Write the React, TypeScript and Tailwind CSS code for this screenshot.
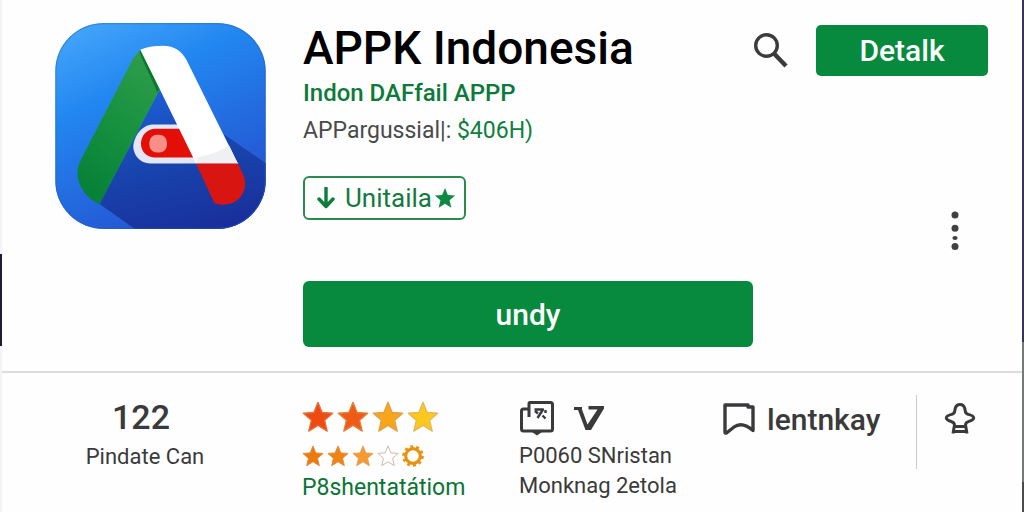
import React from "react";

const STAR = "M12 1 L15.1 8.6 L23 9.2 L17 14.5 L18.9 22.6 L12 18.3 L5.1 22.6 L7 14.5 L1 9.2 L8.9 8.6 Z";

function Star({ className, fill, stroke = "none" }: { className: string; fill: string; stroke?: string }) {
  return (
    <svg viewBox="0 0 24 24" className={className} aria-hidden="true">
      <path d={STAR} fill={fill} stroke={stroke} strokeWidth="1" strokeLinejoin="round" />
    </svg>
  );
}

function AppLogo() {
  return (
    <svg viewBox="45 38 631 617" className="h-[206px] w-full" role="img" aria-label="APPK Indonesia">
      <defs>
        <linearGradient id="sky" x1="0.1" y1="0" x2="0.6" y2="1">
          <stop offset="0" stopColor="#45a6fb" />
          <stop offset="0.35" stopColor="#2286f0" />
          <stop offset="1" stopColor="#2450cf" />
        </linearGradient>
        <linearGradient id="shade" x1="0.3" y1="0" x2="0.6" y2="1">
          <stop offset="0" stopColor="#1c5fd6" />
          <stop offset="0.5" stopColor="#1845ad" />
          <stop offset="1" stopColor="#19309c" />
        </linearGradient>
        <linearGradient id="leaf" x1="0.7" y1="0" x2="0.3" y2="1">
          <stop offset="0" stopColor="#2f9c4a" />
          <stop offset="0.5" stopColor="#16913e" />
          <stop offset="1" stopColor="#078038" />
        </linearGradient>
        <clipPath id="tile">
          <rect x="45" y="38" width="631" height="617" rx="145" />
        </clipPath>
      </defs>
      <g clipPath="url(#tile)">
        <rect x="45" y="38" width="631" height="617" fill="url(#sky)" />
        <path d="M358 238 L560 378 L676 458 V655 H284 L178 580 Z" fill="url(#shade)" />
        <path d="M300 118 L358 238 L178 580 C140 566 112 525 112 488 C112 466 118 456 128 436 L280 142 Z" fill="url(#leaf)" />
        <path d="M300 118 L360 234 L350 245 C338 208 312 168 298 124 Z" fill="#087a2c" />
        <path d="M336 342 H425 L595 459 H330 C298 459 279 432 279 408 C281 376 305 344 336 342 Z" fill="#e3e6f5" />
        <path d="M345 355 H425 L463 441 H345 C317 441 302 421 302 400 C302 376 320 355 345 355 Z" fill="#e30e08" />
        <rect x="327" y="373" width="53" height="53" rx="23" fill="#f58f87" />
        <path d="M300 118 C322 108 346 106 368 106 C402 106 424 122 438 148 L592 459 H467 L358 236 Z" fill="#fff" />
        <path d="M467 441 C520 432 545 420 565 403 L592 459 H470 Z" fill="#eef0f2" />
        <path d="M467 459 H592 L608 492 C626 532 602 582 548 582 C534 582 526 581 521 576 Z" fill="#d91512" />
      </g>
      <rect x="47" y="40" width="627" height="613" rx="143" fill="none" stroke="#2463b8" strokeWidth="3" strokeOpacity="0.5" />
    </svg>
  );
}

function EdgeStrip({ children }: { children: React.ReactNode }) {
  return <div className="flex w-[2px] shrink-0 flex-col" aria-hidden="true">{children}</div>;
}

export default function App() {
  return (
    <div className="flex min-h-screen bg-[#fefefe] font-['Roboto',sans-serif] text-[#3a3a3a]">
      <EdgeStrip>
        <div className="h-[254px] bg-[#f3f3f5]" />
        <div className="h-[92px] bg-[#1f1c3a]" />
        <div className="grow bg-[#f3f3f5]" />
      </EdgeStrip>

      <main className="min-w-0 grow">
        <section className="grid grid-cols-[211px_minmax(0,1fr)_235px] border-b-2 border-[#dcdcdc] pt-[23px] pr-[34px] pb-[24px] pl-[53px]">
          <AppLogo />

          <div className="flex flex-col items-start pl-[37px]">
            <h1 className="text-[46px] leading-[50px] font-medium whitespace-nowrap text-black">APPK Indonesia</h1>
            <a href="#developer" className="text-[24px] leading-[40px] font-medium whitespace-nowrap text-[#0b7a3a]">
              Indon DAFfail APPP
            </a>
            <p className="text-[23px] leading-[36px] whitespace-nowrap text-[#4a4a4a]">
              APPargussial|: <span className="text-[#0e8040]">$406H)</span>
            </p>
            <button
              type="button"
              className="mt-[27px] flex h-[44px] w-[163px] items-center rounded-[6px] border-2 border-[#2b8a50] pl-[12px] text-[26px] text-[#147a40]"
            >
              <svg viewBox="0 0 18 22" className="mr-[10px] h-[22px] w-[18px] shrink-0" aria-hidden="true">
                <path d="M9 1 V19 M2 12 L9 19.5 L16 12" fill="none" stroke="#0c7d3a" strokeWidth="3.4" strokeLinecap="round" strokeLinejoin="round" />
              </svg>
              Unitaila
              <Star className="ml-[2px] h-[22px] w-[22px] shrink-0" fill="#0b8a40" />
            </button>
            <button
              type="button"
              className="mt-[61px] h-[66px] w-full rounded-[6px] bg-[#078a3d] text-[30px] font-medium text-white"
            >
              undy
            </button>
          </div>

          <div className="flex flex-col">
            <div className="flex items-center justify-between pt-[2px]">
              <button type="button" aria-label="Search">
                <svg viewBox="0 0 36 36" className="size-[36px]" fill="none" stroke="#3b3b3d" aria-hidden="true">
                  <circle cx="13.5" cy="12.5" r="10.8" strokeWidth="3.4" />
                  <path d="M21 20.5 L33 33" strokeWidth="4.4" />
                </svg>
              </button>
              <button
                type="button"
                className="h-[51px] w-[172px] rounded-[5px] bg-[#078a3d] text-[30px] font-medium text-white"
              >
                Detalk
              </button>
            </div>
            <button type="button" aria-label="More options" className="mt-[134px] mr-[28px] self-end">
              <svg viewBox="0 0 10 42" className="h-[42px] w-[10px]" fill="#404040" aria-hidden="true">
                <circle cx="5" cy="5" r="3.5" />
                <circle cx="5" cy="18.3" r="3.5" />
                <ellipse cx="5" cy="28" rx="2.6" ry="2.1" />
                <circle cx="5" cy="36.5" r="3.5" />
              </svg>
            </button>
          </div>
        </section>

        <section className="grid grid-cols-[300px_217px_203px_minmax(0,1fr)_106px] pt-[22px]">
          <div className="flex w-[286px] flex-col items-center">
            <strong className="pr-[8px] text-[34px] leading-[44px] font-medium">122</strong>
            <span className="text-[22px] leading-[36px] whitespace-nowrap">Pindate Can</span>
          </div>

          <div>
            <div className="flex h-[44px] items-center gap-[3px]" role="img" aria-label="4 stars">
              <Star className="size-[32px]" fill="#ee4a12" stroke="#e2703c" />
              <Star className="size-[32px]" fill="#f05a17" stroke="#e2803c" />
              <Star className="size-[32px]" fill="#f7a51b" stroke="#e3a048" />
              <Star className="size-[32px]" fill="#fbc91d" stroke="#e3b858" />
            </div>
            <div className="flex h-[34px] items-center gap-[3px]" role="img" aria-label="3 of 5 stars">
              <Star className="size-[22px]" fill="#ee7a0c" stroke="#d98a3c" />
              <Star className="size-[22px]" fill="#f0840f" stroke="#d98a3c" />
              <Star className="size-[22px]" fill="#f59a2c" stroke="#dca060" />
              <Star className="size-[22px]" fill="#fff" stroke="#c9b4a4" />
              <svg viewBox="0 0 24 24" className="size-[22px]" fill="none" stroke="#e8920f" aria-hidden="true">
                <circle cx="12" cy="12" r="8" strokeWidth="3.4" />
                <circle cx="12" cy="12" r="10.4" strokeWidth="2.8" strokeDasharray="3.2 3.33" />
              </svg>
            </div>
            <a href="#reviews" className="block text-[23px] leading-[30px] whitespace-nowrap text-[#0b7336]">
              P8shentatátiom
            </a>
          </div>

          <div>
            <div className="flex h-[46px] items-center gap-[19px]">
              <svg viewBox="0 0 36 36" className="size-[36px]" fill="none" stroke="#3a3a3c" strokeWidth="3" strokeLinejoin="round" aria-hidden="true">
                <path d="M10 17 V3.5 Q10 2.5 11 2.5 H31.5 Q33.5 2.5 33.5 4.5 V29 Q33.5 31 31.5 31 H4.5 Q2.5 31 2.5 29 V11 Q2.5 9 4.5 9 H10" />
                <path d="M13 32 H23 L18 35.5 Z" fill="#3a3a3c" stroke="none" />
                <path d="M15.5 9.5 H24 L18.5 18 M16 11 L19 13.5 M26.5 10 V13 M23.5 15.5 L26.5 18.5" strokeWidth="2.4" />
              </svg>
              <svg viewBox="0 0 30 26" className="h-[26px] w-[30px]" fill="#3a3a3c" aria-hidden="true">
                <path d="M0 2 H8 V4.5 L13.5 19.5 L23.5 4.5 H14.5 V1 H30 V3.5 L17 25 H11.5 L4 5 H0 Z" />
              </svg>
            </div>
            <p className="text-[22px] leading-[30px] whitespace-nowrap">
              P0060 SNristan
              <br />
              Monknag 2etola
            </p>
          </div>

          <a href="#save" className="flex h-[48px] items-center gap-[11px] text-[30px] font-medium whitespace-nowrap">
            <svg viewBox="0 0 34 34" className="size-[34px] shrink-0" fill="none" stroke="#3a3a3c" strokeWidth="3.4" strokeLinejoin="round" aria-hidden="true">
              <path d="M3 3 H26 V5 H31 V28.5 Q20 19 12 25 L4.5 31 Q3 31.5 3 30 Z" />
            </svg>
            lentnkay
          </a>

          <div className="flex h-[74px] items-start border-l border-[#c9cccb] pt-[7px] pl-[27px]">
            <button type="button" aria-label="Pin">
              <svg viewBox="0 0 32 34" className="h-[34px] w-[32px]" fill="none" stroke="#3a3a3c" strokeWidth="3" strokeLinejoin="round" aria-hidden="true">
                <path d="M10.5 23 C10.5 20.5 9 20 6.5 19.2 C3 18 2.3 17.3 2.3 16 C2.3 13.5 5 13 8 12.3 C11.5 11.5 10.5 9 11.2 6.5 C12 3.5 14 2.5 16 2.5 C18 2.5 20 3.5 20.8 6.5 C21.5 9 20.5 11.5 24 12.3 C27 13 29.7 13.5 29.7 16 C29.7 17.3 29 18 25.5 19.2 C23 20 21.5 20.5 21.5 23 L23 31.5 M10.5 23 L9 31.5 M11 24.5 H21" />
                <path d="M9.5 29.5 H22.5" />
              </svg>
            </button>
          </div>
        </section>
      </main>

      <EdgeStrip>
        <div className="h-[342px] bg-[#3a3163]" />
        <div className="h-[140px] bg-[#747a74]" />
        <div className="grow bg-[#4a4a4a]" />
      </EdgeStrip>
    </div>
  );
}
